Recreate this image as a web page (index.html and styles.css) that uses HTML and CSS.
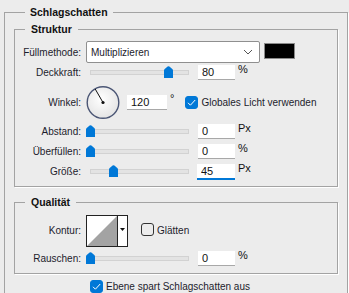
FILE: index.html
```html
<!DOCTYPE html>
<html>
<head>
    <title>Schlagschatten</title>
    <link rel="stylesheet" href="styles.css">
</head>
<body>

<fieldset class="group outer">
    <legend>Schlagschatten</legend>

    <fieldset class="group">
        <legend>Struktur</legend>

        <div class="row row-blend">
            <label class="lbl">Füllmethode:</label>
            <div class="select">
                <span>Multiplizieren</span>
                <svg class="chev" width="10" height="6" viewBox="0 0 10 6"><path d="M1 1 L5 5 L9 1" fill="none" stroke="#555" stroke-width="1"/></svg>
            </div>
            <div class="swatch"></div>
        </div>

        <div class="row row-short">
            <label class="lbl">Deckkraft:</label>
            <div class="slider">
                <div class="track"></div>
                <svg class="thumb" style="left:78px" width="9" height="12" viewBox="0 0 9 12"><path d="M0 12 V4.5 Q0 3.5 1 2.8 L3.6 0.6 Q4.5 0 5.4 0.6 L8 2.8 Q9 3.5 9 4.5 V12 Z" fill="#0078d7"/></svg>
            </div>
            <input class="num" type="text" value="80">
            <span class="unit">%</span>
        </div>

        <div class="row row-angle">
            <label class="lbl">Winkel:</label>
            <svg class="dial" width="34" height="35" viewBox="0 0 34 35">
                <defs>
                    <radialGradient id="dialfill" cx="45%" cy="40%" r="65%">
                        <stop offset="0" stop-color="#ffffff"/>
                        <stop offset="1" stop-color="#e2e2e2"/>
                    </radialGradient>
                </defs>
                <circle cx="17" cy="17.5" r="15.8" fill="url(#dialfill)" stroke="#4b5675" stroke-width="1.4"/>
                <line x1="17" y1="17.5" x2="9.2" y2="4" stroke="#111" stroke-width="1"/>
                <circle cx="17" cy="17.5" r="1.6" fill="#111"/>
            </svg>
            <input class="num num-wide" type="text" value="120">
            <span class="unit unit-deg">°</span>
            <span class="check on">
                <svg width="13" height="13" viewBox="0 0 13 13"><path d="M3 6.8 L5.4 9.2 L10.2 4" fill="none" stroke="#fff" stroke-width="1"/></svg>
            </span>
            <span class="check-text">Globales Licht verwenden</span>
        </div>

        <div class="row">
            <label class="lbl">Abstand:</label>
            <div class="slider">
                <div class="track"></div>
                <svg class="thumb" style="left:0px" width="9" height="12" viewBox="0 0 9 12"><path d="M0 12 V4.5 Q0 3.5 1 2.8 L3.6 0.6 Q4.5 0 5.4 0.6 L8 2.8 Q9 3.5 9 4.5 V12 Z" fill="#0078d7"/></svg>
            </div>
            <input class="num" type="text" value="0">
            <span class="unit">Px</span>
        </div>

        <div class="row">
            <label class="lbl">Überfüllen:</label>
            <div class="slider">
                <div class="track"></div>
                <svg class="thumb" style="left:0px" width="9" height="12" viewBox="0 0 9 12"><path d="M0 12 V4.5 Q0 3.5 1 2.8 L3.6 0.6 Q4.5 0 5.4 0.6 L8 2.8 Q9 3.5 9 4.5 V12 Z" fill="#0078d7"/></svg>
            </div>
            <input class="num" type="text" value="0">
            <span class="unit">%</span>
        </div>

        <div class="row">
            <label class="lbl">Größe:</label>
            <div class="slider">
                <div class="track"></div>
                <svg class="thumb" style="left:23px" width="9" height="12" viewBox="0 0 9 12"><path d="M0 12 V4.5 Q0 3.5 1 2.8 L3.6 0.6 Q4.5 0 5.4 0.6 L8 2.8 Q9 3.5 9 4.5 V12 Z" fill="#0078d7"/></svg>
            </div>
            <input class="num focus" type="text" value="45">
            <span class="unit">Px</span>
        </div>
    </fieldset>

    <fieldset class="group quality">
        <legend>Qualität</legend>

        <div class="row row-contour">
            <label class="lbl">Kontur:</label>
            <div class="contour">
                <svg class="curve" width="30" height="30" viewBox="0 0 30 30">
                    <rect width="30" height="30" fill="#fff"/>
                    <path d="M0 30 L30 0 L30 30 Z" fill="#a3a3a3"/>
                </svg>
                <div class="drop">
                    <svg width="5" height="3" viewBox="0 0 5 3"><path d="M0 0 H5 L2.5 3 Z" fill="#111"/></svg>
                </div>
            </div>
            <span class="check"></span>
            <span class="check-text">Glätten</span>
        </div>

        <div class="row row-short">
            <label class="lbl">Rauschen:</label>
            <div class="slider">
                <div class="track"></div>
                <svg class="thumb" style="left:0px" width="9" height="12" viewBox="0 0 9 12"><path d="M0 12 V4.5 Q0 3.5 1 2.8 L3.6 0.6 Q4.5 0 5.4 0.6 L8 2.8 Q9 3.5 9 4.5 V12 Z" fill="#0078d7"/></svg>
            </div>
            <input class="num" type="text" value="0">
            <span class="unit">%</span>
        </div>
    </fieldset>

    <div class="row row-bottom">
        <span class="check on">
            <svg width="13" height="13" viewBox="0 0 13 13"><path d="M3 6.8 L5.4 9.2 L10.2 4" fill="none" stroke="#fff" stroke-width="1"/></svg>
        </span>
        <span class="check-text">Ebene spart Schlagschatten aus</span>
    </div>
</fieldset>

</body>
</html>
```

FILE: styles.css
```css
body {
    margin: 0;
    padding-top: 5px;
    background: #ececec;
    font-family: 'Liberation Sans', Arial, sans-serif;
    font-size: 10px;
    color: #1c1c2c;
    overflow: hidden;
}

.group {
    margin: 0;
    padding: 4px 0 5px 0;
    border: 1px solid #a3a3a3;
    box-shadow: 1px 1px 0 #fff;
    min-width: 0;
}

.group legend {
    margin-left: 10px;
    padding: 0 6px;
    font-weight: bold;
    font-size: 10.5px;
    line-height: 15px;
    color: #111;
}

.outer {
    box-sizing: border-box;
    width: 344px;
    margin-left: 4px;
    padding: 2px 9px 30px 9px;
}

.outer > legend {
    margin-left: 11px;
    padding: 0 5px;
}

.quality {
    margin-top: 8px;
    padding: 4px 0 6px 0;
}

.row {
    display: flex;
    align-items: center;
    height: 20px;
}

.row-blend {
    height: 22px;
}

.row-short {
    height: 18px;
}

.row-angle {
    height: 37px;
    margin-top: 3px;
}

.row-contour {
    height: 33px;
    margin-bottom: 2px;
}

.lbl {
    width: 66px;
    margin-right: 5px;
    text-align: right;
    white-space: nowrap;
}

.select {
    box-sizing: border-box;
    width: 174px;
    height: 22px;
    display: flex;
    align-items: center;
    justify-content: space-between;
    padding: 0 6px 0 4px;
    background: #fff;
    border: 1px solid #8f8f8f;
    border-radius: 2px;
}

.swatch {
    box-sizing: border-box;
    width: 31px;
    height: 16px;
    margin-left: 4px;
    margin-bottom: 3px;
    background: #000;
    border: 1px solid #8a8a8a;
}

.slider {
    position: relative;
    width: 103px;
    height: 12px;
    display: flex;
    align-items: center;
    margin-right: 9px;
}

.track {
    flex: 1;
    height: 3px;
    margin: 1px 0 0 4px;
    background: #e3e3e3;
    border: 1px solid #d2d2d2;
}

.thumb {
    position: absolute;
    top: 0;
    display: block;
}

.num {
    box-sizing: border-box;
    width: 37px;
    height: 15px;
    padding: 0 0 0 4px;
    margin: 0;
    border: none;
    border-bottom: 1px solid #a8a8a8;
    background: #fff;
    font: inherit;
    font-size: 11px;
    color: #111;
    outline: none;
}

.num-wide {
    width: 40px;
    margin-left: 7px;
}

.num.focus {
    border-bottom: 2px solid #0078d7;
    height: 16px;
    width: 38px;
    margin-left: -1px;
    margin-top: 1px;
}

.unit {
    margin-left: 3px;
    margin-bottom: 6px;
    font-size: 11px;
    color: #111;
}

.unit-deg {
    margin-bottom: 10px;
}

.dial {
    display: block;
}

.check {
    box-sizing: border-box;
    width: 13px;
    height: 13px;
    margin-left: 11px;
    border: 1px solid #333;
    border-radius: 3px;
    display: flex;
}

.check.on {
    background: #0078d7;
    border-color: #0078d7;
}

.check svg {
    margin: -1px;
}

.check-text {
    margin-left: 3px;
    white-space: nowrap;
}

.contour {
    box-sizing: border-box;
    width: 42px;
    height: 32px;
    display: flex;
    border: 1px solid #222;
    background: #fff;
}

.curve {
    display: block;
}

.drop {
    flex: 1;
    border-left: 1px solid #222;
    display: flex;
    align-items: center;
    justify-content: center;
    padding-bottom: 3px;
}

.row-contour .check {
    margin-left: 13px;
    margin-bottom: 2px;
}

.row-bottom {
    height: 18px;
    margin-top: 3px;
    padding-left: 76px;
}

.row-bottom .check {
    margin-left: 0;
}
```
